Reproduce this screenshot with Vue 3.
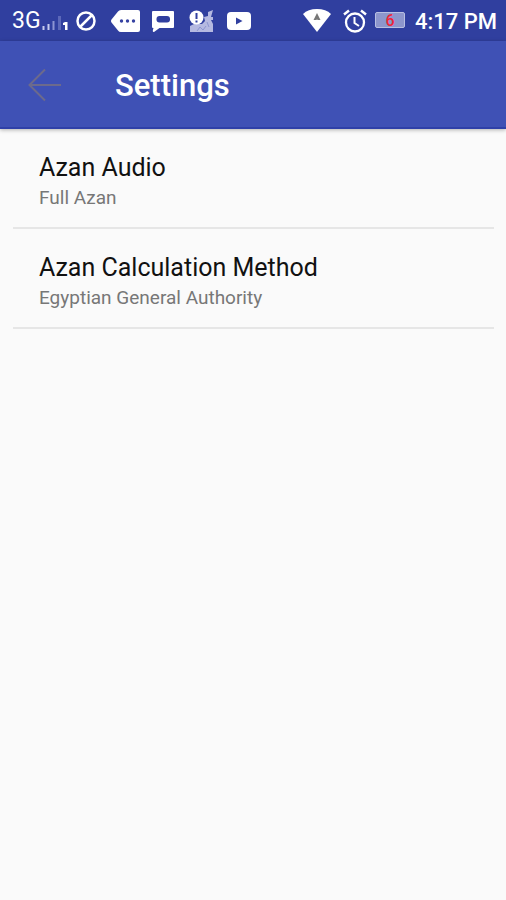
<script setup>
const settings = [
  { title: 'Azan Audio', value: 'Full Azan' },
  { title: 'Azan Calculation Method', value: 'Egyptian General Authority' },
]
</script>

<template>
  <div class="screen">
    <div class="status">
      <div class="group">
        <span class="network">3G</span>
        <svg class="signal" width="26" height="20" viewBox="0 0 26 20" aria-hidden="true">
          <path d="M1.500 13v4M6.500 11v6" stroke="#c5cbee" stroke-width="2" />
          <path d="M11.500 8v9" stroke="#8c95d2" stroke-width="2" />
          <path d="M17.500 3v14" stroke="#5c68b9" stroke-width="3" />
          <path d="M21 10l2-1h2.500v8H23v-5h-2z" fill="#fff" />
        </svg>
        <svg class="blocked" width="20" height="20" viewBox="0 0 20 20" aria-hidden="true">
          <circle cx="10" cy="10" r="8.500" fill="none" stroke="#fff" stroke-width="2.500" />
          <path d="M4.500 15.500l11-11" stroke="#fff" stroke-width="2.500" />
        </svg>
        <svg class="tag" width="29" height="22" viewBox="0 0 29 22" aria-hidden="true">
          <path d="M10 0h17q2 0 2 2v18q0 2-2 2H10q-2 0-3-1.500L0.500 12.500q-1-1.500 0-3L7 1.500Q8 0 10 0z" fill="#fff" />
          <circle cx="10.500" cy="11" r="1.700" fill="#3642a2" />
          <circle cx="16.500" cy="11" r="1.700" fill="#3642a2" />
          <circle cx="22.500" cy="11" r="1.700" fill="#3642a2" />
        </svg>
        <svg class="chat" width="22" height="22" viewBox="0 0 22 22" aria-hidden="true">
          <path d="M1 1h20q1 0 1 1v15q0 1-1 1H7.500L2 22q-1.500 0-1.200-1.500L1.500 18H1q-1 0-1-1V2q0-1 1-1z" fill="#fff" />
          <rect x="4.500" y="6" width="13.500" height="6.500" rx="3" fill="#303f9f" />
        </svg>
        <svg class="people" width="25" height="24" viewBox="0 0 25 24" aria-hidden="true">
          <path d="M1 23v-6l4-2h8l3-3-1-4 4-1V3l5-2-2 7h2v3h-2l2 4v8z" fill="#b5b9e1" />
          <path d="M8 22l3-4 3 3 3-4M18 13l2 5" fill="none" stroke="#8d96d0" stroke-width="1" />
          <circle cx="7.500" cy="8.500" r="7" fill="#fff" />
          <path d="M6.500 4h2v6h-2zM6.500 11.500h2v2h-2z" fill="#303f9f" />
        </svg>
        <svg class="video" width="24" height="18" viewBox="0 0 24 18" aria-hidden="true">
          <rect width="24" height="18" rx="4" fill="#fff" />
          <path d="M9 5.500l6.500 3.500L9 12.500z" fill="#303f9f" />
        </svg>
      </div>
      <div class="group right">
        <svg class="wifi" width="28" height="23" viewBox="0 0 28 23" aria-hidden="true">
          <path d="M0 5Q5 0 14 0t14 5L14 23z" fill="#fff" />
          <path d="M14 4l3.500 7h-2.500q-1-1-2 0h-2.500z" fill="#777" />
        </svg>
        <svg class="alarm" width="24" height="24" viewBox="0 0 24 24" aria-hidden="true">
          <circle cx="12" cy="13.500" r="9" fill="none" stroke="#fff" stroke-width="2.300" />
          <path d="M1 5.500l5-4M23 5.500l-5-4" stroke="#fff" stroke-width="2.500" />
          <path d="M11.500 8v6l4.500 3" fill="none" stroke="#fff" stroke-width="2" />
        </svg>
        <span class="battery">6</span>
        <span class="clock">4:17 PM</span>
      </div>
    </div>
    <header class="bar">
      <button class="back" type="button" aria-label="Back">
        <svg width="34" height="34" viewBox="0 0 34 34" aria-hidden="true">
          <path d="M33 17H1.500M17 1.500L1.500 17 17 32.500" fill="none" stroke="#6c6a8c" stroke-width="2" />
        </svg>
      </button>
      <h1>Settings</h1>
    </header>
    <main class="list">
      <button v-for="s in settings" :key="s.title" class="row" type="button">
        <span class="title">{{ s.title }}</span>
        <span class="value">{{ s.value }}</span>
      </button>
    </main>
  </div>
</template>

<style>
body {
  background: #fafafa;
}
</style>

<style scoped>
.screen {
  min-height: 100vh;
  font-family: Roboto, "Liberation Sans", sans-serif;
  background: #fafafa;
}
.status {
  display: flex;
  justify-content: space-between;
  height: 41px;
  box-sizing: border-box;
  padding: 0 9px 0 12px;
  background: #303f9f;
  color: #fff;
}
.group {
  display: flex;
  align-items: center;
}
.group svg {
  flex: none;
}
.network {
  width: 30px;
  font-size: 23px;
  line-height: 40px;
}
.signal {
  margin-top: 4px;
}
.blocked {
  margin-left: 8px;
}
.tag {
  margin-left: 15px;
}
.chat {
  margin-left: 12px;
}
.people {
  margin-left: 15px;
}
.video {
  margin-left: 13px;
}
.right {
  gap: 8px;
}
.wifi {
  margin-right: 4px;
}
.battery {
  box-sizing: border-box;
  width: 30px;
  height: 16px;
  margin-bottom: 2px;
  border: 1px solid #b8bfe2;
  border-radius: 2px;
  background: #8d96cc;
  color: #ee2438;
  font-size: 16px;
  font-weight: 500;
  line-height: 15px;
  text-align: center;
}
.clock {
  margin-left: 2px;
  padding-top: 2px;
  font-size: 22px;
  font-weight: 500;
  line-height: 38px;
  white-space: nowrap;
}
.bar {
  display: flex;
  align-items: center;
  height: 88px;
  box-sizing: border-box;
  padding: 2px 28px 0;
  gap: 53px;
  border-bottom: 2px solid #2f40a8;
  background: #3f51b5;
  box-shadow: 0 1px 4px rgba(0, 0, 0, 0.3);
}
button {
  border: 0;
  padding: 0;
  background: none;
  font-family: inherit;
  cursor: pointer;
}
.back {
  display: flex;
}
h1 {
  margin: 0;
  padding-top: 2px;
  color: #fff;
  font-size: 31px;
  font-weight: 500;
  line-height: 40px;
}
.list {
  display: flex;
  flex-direction: column;
  padding: 0 12px 0 13px;
}
.row {
  display: flex;
  flex-direction: column;
  height: 100px;
  padding: 23px 26px 0;
  border-bottom: 2px solid #e6e6e6;
  text-align: left;
}
.title {
  color: #111;
  font-size: 25px;
  line-height: 32px;
}
.value {
  color: #777;
  font-size: 19px;
  line-height: 28px;
}
</style>
